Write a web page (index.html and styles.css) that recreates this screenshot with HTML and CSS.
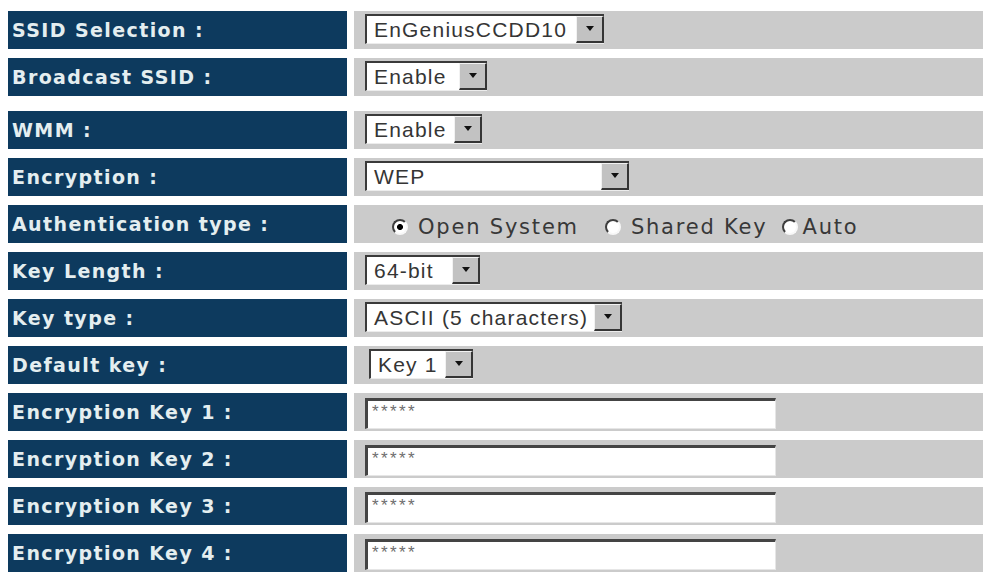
FILE: index.html
```html
<!DOCTYPE html>
<html>
<head>
<meta charset="utf-8">
<title>Wireless Security</title>
<link rel="stylesheet" href="styles.css">
</head>
<body>
<div class="form">
  <div class="row">
    <div class="label">SSID Selection :</div>
    <div class="value">
      <div class="select sel-ssid"><span class="sel-text">EnGeniusCCDD10</span><span class="sel-btn"><span class="arrow"></span></span></div>
    </div>
  </div>
  <div class="row">
    <div class="label">Broadcast SSID :</div>
    <div class="value">
      <div class="select sel-bcast"><span class="sel-text">Enable</span><span class="sel-btn"><span class="arrow"></span></span></div>
    </div>
  </div>
  <div class="row row-spaced">
    <div class="label">WMM :</div>
    <div class="value">
      <div class="select sel-wmm"><span class="sel-text">Enable</span><span class="sel-btn"><span class="arrow"></span></span></div>
    </div>
  </div>
  <div class="row">
    <div class="label">Encryption :</div>
    <div class="value">
      <div class="select sel-enc"><span class="sel-text">WEP</span><span class="sel-btn"><span class="arrow"></span></span></div>
    </div>
  </div>
  <div class="row">
    <div class="label">Authentication type :</div>
    <div class="value value-radios">
      <label class="opt opt-open"><span class="radio checked"></span>Open System</label>
      <label class="opt opt-shared"><span class="radio"></span>Shared Key</label>
      <label class="opt opt-auto"><span class="radio"></span>Auto</label>
    </div>
  </div>
  <div class="row">
    <div class="label">Key Length :</div>
    <div class="value">
      <div class="select sel-len"><span class="sel-text">64-bit</span><span class="sel-btn"><span class="arrow"></span></span></div>
    </div>
  </div>
  <div class="row">
    <div class="label">Key type :</div>
    <div class="value">
      <div class="select sel-ktype"><span class="sel-text">ASCII (5 characters)</span><span class="sel-btn"><span class="arrow"></span></span></div>
    </div>
  </div>
  <div class="row">
    <div class="label">Default key :</div>
    <div class="value">
      <div class="select sel-dkey"><span class="sel-text">Key 1</span><span class="sel-btn"><span class="arrow"></span></span></div>
    </div>
  </div>
  <div class="row">
    <div class="label">Encryption Key 1 :</div>
    <div class="value"><input class="keyfield" type="text" value="*****" readonly></div>
  </div>
  <div class="row">
    <div class="label">Encryption Key 2 :</div>
    <div class="value"><input class="keyfield" type="text" value="*****" readonly></div>
  </div>
  <div class="row">
    <div class="label">Encryption Key 3 :</div>
    <div class="value"><input class="keyfield" type="text" value="*****" readonly></div>
  </div>
  <div class="row">
    <div class="label">Encryption Key 4 :</div>
    <div class="value"><input class="keyfield" type="text" value="*****" readonly></div>
  </div>
</div>
</body>
</html>
```

FILE: styles.css
```css
html, body {
  margin: 0;
  padding: 0;
  background: #ffffff;
}

.form {
  display: flex;
  flex-direction: column;
  gap: 9px;
  padding: 11px 0 0 8px;
  width: 975px;
}

.row {
  display: flex;
  gap: 7px;
  height: 38px;
}

.row-spaced {
  margin-top: 6px;
}

.label {
  width: 339px;
  flex: none;
  box-sizing: border-box;
  padding-left: 4px;
  background: #0d3a5e;
  color: #e4eef0;
  font-family: "DejaVu Sans", Verdana, sans-serif;
  font-weight: bold;
  font-size: 19px;
  letter-spacing: 1.4px;
  display: flex;
  align-items: center;
  white-space: nowrap;
}

.value {
  flex: 1;
  background: #cbcbcb;
  padding-left: 11px;
  display: flex;
  align-items: center;
}

/* classic drop-down */
.select {
  display: flex;
  box-sizing: border-box;
  height: 30px;
  margin-top: -3px;
  background: #ffffff;
  border-style: solid;
  border-width: 2px 0 1px 2px;
  border-color: #3a3a3a #ffffff #ececec #3a3a3a;
}

.sel-text {
  flex: 1;
  padding-left: 7px;
  font-family: "Liberation Sans", Arial, sans-serif;
  font-size: 21px;
  letter-spacing: 1.2px;
  line-height: 27px;
  color: #353535;
  white-space: nowrap;
  overflow: hidden;
}

.sel-btn {
  flex: none;
  width: 28px;
  box-sizing: border-box;
  background: #c2c2c2;
  border-style: solid;
  border-width: 1px 2px 2px 1px;
  border-color: #f2f2f2 #353535 #353535 #f2f2f2;
  display: flex;
  align-items: center;
  justify-content: center;
}

.arrow {
  width: 0;
  height: 0;
  border-left: 4px solid transparent;
  border-right: 4px solid transparent;
  border-top: 5px solid #111111;
}

.sel-ssid { width: 239px; }
.sel-bcast { width: 122px; }
.sel-wmm { width: 117px; }
.sel-enc { width: 264px; }
.sel-len { width: 115px; }
.sel-ktype { width: 257px; }
.sel-dkey { width: 104px; margin-left: 4px; }

/* radios */
.value-radios {
  padding-left: 38px;
  padding-top: 5px;
  box-sizing: border-box;
}

.opt {
  display: flex;
  align-items: center;
  font-family: "DejaVu Sans", Verdana, sans-serif;
  font-size: 21px;
  letter-spacing: 1.8px;
  color: #383838;
  white-space: nowrap;
}

.opt-open { margin-right: 26px; }
.opt-shared { margin-right: 14px; }

.radio {
  flex: none;
  width: 16px;
  height: 16px;
  box-sizing: border-box;
  margin-right: 10px;
  border-radius: 50%;
  border: 2px solid;
  border-color: #3e3e3e #f8f8f8 #f8f8f8 #3e3e3e;
  background: #ffffff;
}

.opt-auto .radio { margin-right: 5px; }

.radio.checked {
  background: radial-gradient(circle, #000000 0 2.6px, #ffffff 3.4px);
}

/* key fields */
.keyfield {
  width: 411px;
  height: 31px;
  box-sizing: border-box;
  margin: 0;
  margin-top: 2px;
  padding: 5px 0 9px 4px;
  border-style: solid;
  border-width: 3px 1px 1px 3px;
  border-color: #444444 #e6e6e6 #e6e6e6 #444444;
  background: #ffffff;
  font-family: "Liberation Sans", Arial, sans-serif;
  font-size: 17px;
  line-height: 14px;
  letter-spacing: 2.4px;
  color: #6e6e6e;
  outline: none;
}
```
